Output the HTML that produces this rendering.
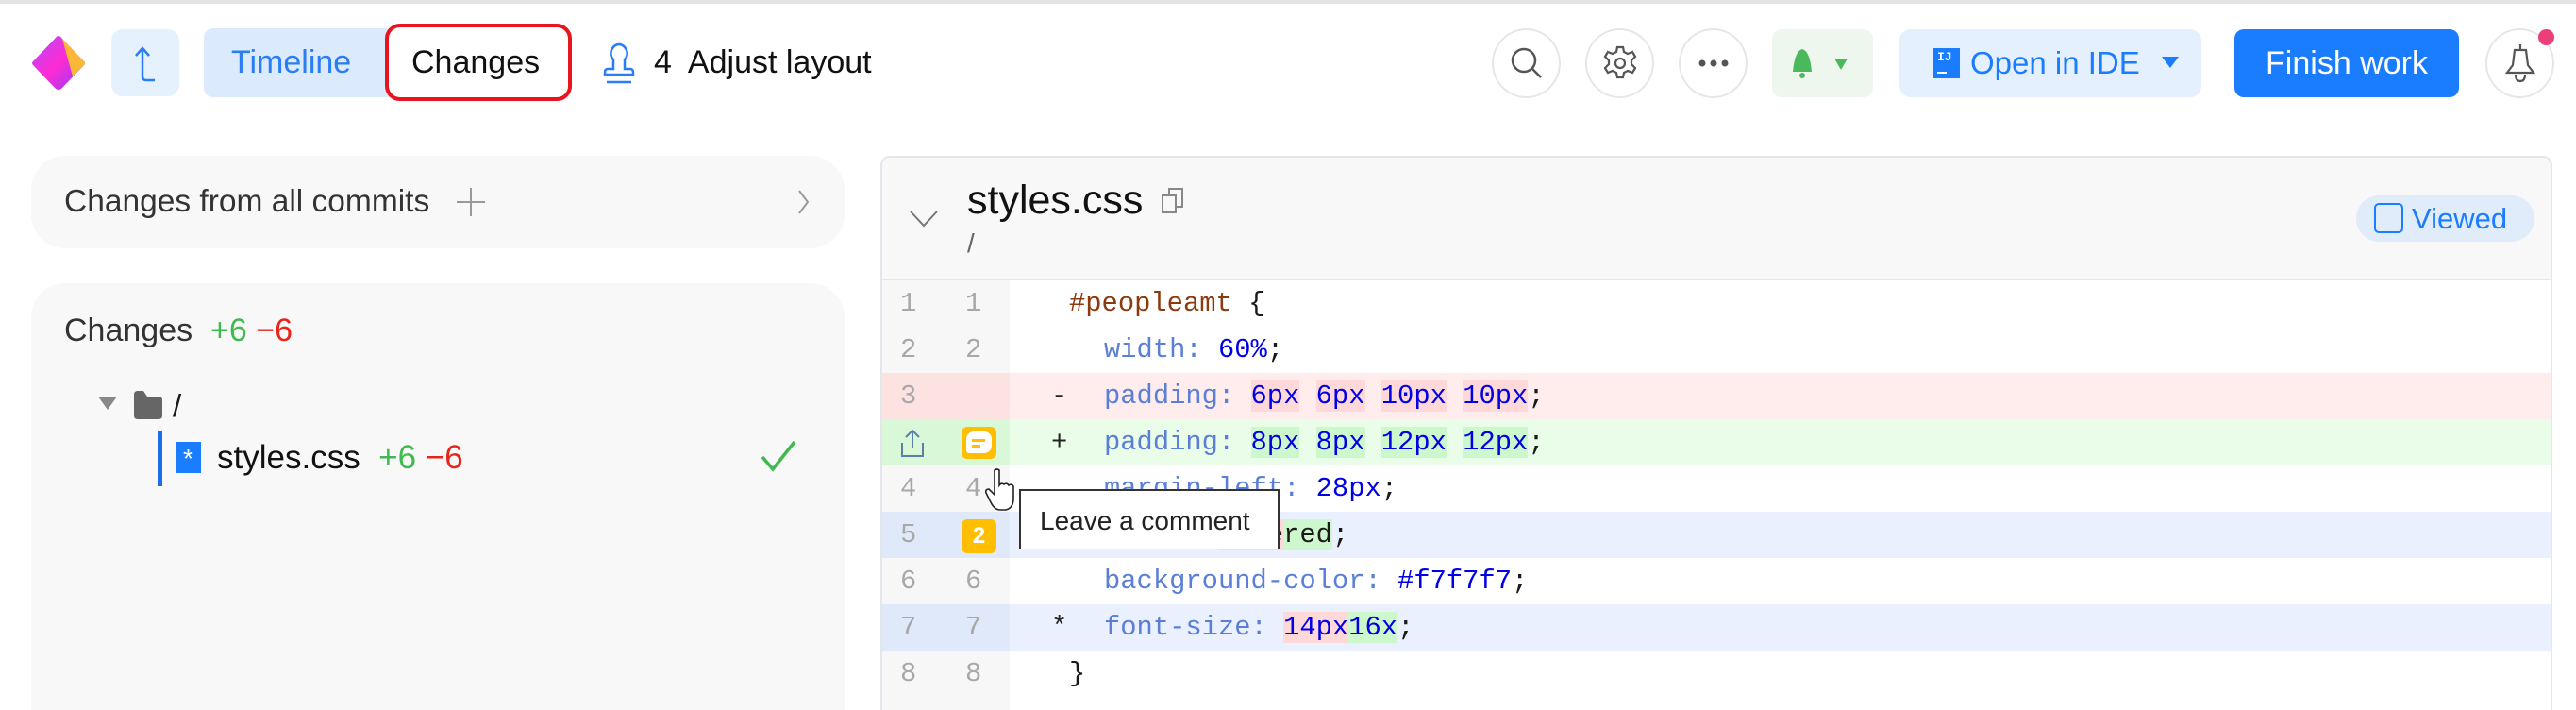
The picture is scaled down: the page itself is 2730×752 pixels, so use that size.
<!DOCTYPE html>
<html><head><meta charset="utf-8"><style>
*{box-sizing:border-box;margin:0;padding:0}
html{width:2730px;height:752px;overflow:hidden}
body{width:2730px;height:752px;overflow:hidden;background:#fff;font-family:"Liberation Sans",sans-serif;position:relative;color:#1a1a1a}
.a{position:absolute}
.circ{position:absolute;top:30px;width:73px;height:74px;border:2px solid #e6e6e6;border-radius:50%;display:flex;align-items:center;justify-content:center}
.row{position:absolute;left:935px;width:1768px;height:49px;font-family:"Liberation Mono",monospace;font-size:28.8px;line-height:49px;white-space:pre}
.g{position:absolute;left:0;top:0;width:135px;height:49px;background:#f7f7f7;color:#a8a8a8}
.g span{position:absolute}
.n1{left:19px}.n2{left:88px}
.c{position:absolute;left:135px;top:0;right:0;height:49px}
.code{position:absolute;left:235px}
.mk{position:absolute;left:179px;color:#222}
.p{color:#5b7fd8}.v{color:#0000e6}.s{color:#8b3a0f}
.hd{background:#ffd9d9}.ha{background:#cdf7cd}
</style></head><body>
<div class="a" style="left:0;top:0;width:2730px;height:4px;background:#e3e3e3"></div>
<svg class="a" style="left:33px;top:37px" width="58" height="60" viewBox="0 0 58 60"><defs><linearGradient id="lg" x1="0" y1="0" x2="1" y2="1"><stop offset="0" stop-color="#b14bff"/><stop offset=".5" stop-color="#ff2bd2"/><stop offset="1" stop-color="#8a3cff"/></linearGradient></defs><path d="M29 1 Q31 1 33 4 L56 28 Q58 30 56 32 L33 56 Q29 60 25 56 L2 32 Q0 30 2 28 L25 4 Q27 1 29 1Z" fill="url(#lg)"/><path d="M33 4 L56 28 Q58 30 56 32 L44 44 Z" fill="#ffcf1a" opacity=".85"/></svg>
<div class="a" style="left:118px;top:31px;width:72px;height:71px;background:#e6f1fe;border-radius:12px"></div>
<svg class="a" style="left:136px;top:45px" width="36" height="44" viewBox="0 0 36 44" fill="none" stroke="#2a7df5" stroke-width="2.5"><path d="M8 14 L15 6 L22 14 M15 6 V36 Q15 40 19 40 H28"/></svg>
<div class="a" style="left:216px;top:30px;width:390px;height:73px;background:#dbeafc;border-radius:10px"></div>
<div class="a" style="left:245px;top:30px;line-height:73px;font-size:34px;color:#2a7df5">Timeline</div>
<div class="a" style="left:408px;top:25px;width:198px;height:82px;border:4px solid #e8141e;border-radius:16px;background:#fff"></div>
<div class="a" style="left:436px;top:30px;line-height:73px;font-size:34px;color:#111">Changes</div>
<svg class="a" style="left:636px;top:45px" width="40" height="48" viewBox="0 0 40 48" fill="none" stroke="#2a7df5" stroke-width="2.5"><path d="M14 28 V18 Q10 14 12 8 Q15 2 20 2 Q25 2 28 8 Q30 14 26 18 V28 H32 Q35 28 35 32 V34 H5 V32 Q5 28 8 28 Z"/><path d="M7 42 H33"/></svg>
<div class="a" style="left:693px;top:30px;line-height:73px;font-size:34px;color:#111">4&nbsp; Adjust layout</div>
<div class="circ" style="left:1581px"><svg width="40" height="40" viewBox="0 0 40 40" fill="none" stroke="#555" stroke-width="2.5"><circle cx="17" cy="17" r="12"/><path d="M26 26 L35 35"/></svg></div>
<div class="circ" style="left:1680px"><svg width="40" height="40" viewBox="0 0 40 40" fill="none" stroke="#555" stroke-width="2.2"><path d="M17 3h6l1 5 4 2 5-2 3 5-4 4v4l4 4-3 5-5-2-4 2-1 5h-6l-1-5-4-2-5 2-3-5 4-4v-4l-4-4 3-5 5 2 4-2z"/><circle cx="20" cy="20" r="5"/></svg></div>
<div class="circ" style="left:1779px"><svg width="36" height="10"><circle cx="6" cy="5" r="3.5" fill="#555"/><circle cx="18" cy="5" r="3.5" fill="#555"/><circle cx="30" cy="5" r="3.5" fill="#555"/></svg></div>
<div class="a" style="left:1878px;top:31px;width:107px;height:72px;background:#edf7ee;border-radius:10px"></div>
<svg class="a" style="left:1896px;top:50px" width="72" height="34" viewBox="0 0 72 34"><path d="M4 26 Q6 4 14 2 Q22 4 24 26 Z" fill="#4cb85c"/><circle cx="14" cy="30" r="3" fill="#4cb85c"/><polygon points="48,12 62,12 55,24" fill="#4cb85c"/></svg>
<div class="a" style="left:2013px;top:31px;width:320px;height:72px;background:#e4f0fe;border-radius:12px"></div>
<div class="a" style="left:2049px;top:51px;width:28px;height:32px;background:#1a7cff;color:#fff;font-family:'Liberation Mono',monospace;font-weight:bold;font-size:13px;line-height:14px;padding:3px 0 0 4px">IJ<div style="width:10px;height:2px;background:#fff;margin-top:8px"></div></div>
<div class="a" style="left:2088px;top:30px;line-height:73px;font-size:33px;color:#1a7cff">Open in IDE</div>
<svg class="a" style="left:2291px;top:60px" width="18" height="14"><polygon points="0,0 18,0 9,12" fill="#1a7cff"/></svg>
<div class="a" style="left:2368px;top:31px;width:238px;height:72px;background:#1a7cff;border-radius:10px;color:#fff;font-size:34px;line-height:72px;text-align:center">Finish work</div>
<div class="circ" style="left:2634px"><svg width="40" height="44" viewBox="0 0 40 44" fill="none" stroke="#555" stroke-width="2.2"><path d="M20 2 V8 M14 8 H26 L28 24 L34 32 H6 L12 24 Z"/><path d="M15 34 Q15 41 20 41 Q25 41 25 34"/></svg></div>
<div class="a" style="left:2690px;top:31px;width:17px;height:17px;border-radius:50%;background:#ec3f7a"></div>
<div class="a" style="left:33px;top:165px;width:862px;height:98px;background:#f8f8f8;border-radius:36px"></div>
<div class="a" style="left:68px;top:165px;line-height:98px;font-size:33.5px;color:#333">Changes from all commits</div>
<svg class="a" style="left:483px;top:197px" width="32" height="34" stroke="#999" stroke-width="2"><path d="M16 2 V32 M1 17 H31"/></svg>
<svg class="a" style="left:845px;top:200px" width="14" height="28" fill="none" stroke="#999" stroke-width="2"><path d="M2 2 L11 14 L2 26"/></svg>
<div class="a" style="left:33px;top:300px;width:862px;height:452px;background:#f8f8f8;border-radius:36px 36px 0 0"></div>
<div class="a" style="left:68px;top:325px;line-height:50px;font-size:34px;color:#333">Changes&nbsp; <span style="color:#3fb950">+6</span> <span style="color:#e8241a">−6</span></div>
<svg class="a" style="left:104px;top:420px" width="20" height="16"><polygon points="0,0 20,0 10,14" fill="#888"/></svg>
<svg class="a" style="left:142px;top:414px" width="30" height="30"><path d="M0 4 Q0 0 4 0 H10 L14 6 H26 Q30 6 30 10 V26 Q30 30 26 30 H4 Q0 30 0 26 Z" fill="#666"/></svg>
<div class="a" style="left:183px;top:405px;font-size:33px;line-height:50px">/</div>
<div class="a" style="left:167px;top:456px;width:5px;height:59px;background:#1a6ee8"></div>
<div class="a" style="left:186px;top:468px;width:27px;height:33px;background:#1a7cff;color:#fff;font-size:28px;line-height:36px;text-align:center">*</div>
<div class="a" style="left:230px;top:460px;line-height:50px;font-size:35px;color:#111">styles.css&nbsp; <span style="color:#3fb950">+6</span> <span style="color:#e8241a">−6</span></div>
<svg class="a" style="left:806px;top:466px" width="38" height="34" fill="none" stroke="#3fb950" stroke-width="3.5"><path d="M2 18 L13 31 L36 2"/></svg>
<div class="a" style="left:933px;top:165px;width:1772px;height:587px;border:2px solid #e3e6ea;border-bottom:none;border-radius:10px 10px 0 0;background:#fff;overflow:hidden">
<div style="height:130px;background:#f8f8f8;border-bottom:2px solid #e3e6ea"></div></div>
<svg class="a" style="left:963px;top:222px" width="32" height="20" fill="none" stroke="#777" stroke-width="2"><path d="M2 2 L16 17 L30 2"/></svg>
<div class="a" style="left:1025px;top:187px;font-size:43px;line-height:50px;color:#111">styles.css</div>
<svg class="a" style="left:1231px;top:199px" width="24" height="28" fill="none" stroke="#888" stroke-width="2"><rect x="1" y="8" width="14" height="18"/><path d="M8 8 V1 H22 V20 H15"/></svg>
<div class="a" style="left:1025px;top:240px;font-size:28px;line-height:36px;color:#666">/</div>
<div class="a" style="left:2497px;top:207px;width:189px;height:49px;border-radius:25px;background:#e1ecfa"></div>
<div class="a" style="left:2516px;top:215px;width:31px;height:32px;border:2.5px solid #1a7cff;border-radius:5px"></div>
<div class="a" style="left:2556px;top:207px;line-height:49px;font-size:31px;color:#1a7cff">Viewed</div>
<div class="row" style="top:297px"><div class="g"><span class="n1">1</span><span class="n2">1</span></div><div class="c"><span class="code" style="left:63px"><span class="s">#peopleamt</span> {</span></div></div>
<div class="row" style="top:346px"><div class="g"><span class="n1">2</span><span class="n2">2</span></div><div class="c"><span class="code" style="left:100px"><span class="p">width:</span> <span class="v">60%</span>;</span></div></div>
<div class="row" style="top:395px"><div class="g" style="background:#fde2e2"><span class="n1">3</span></div><div class="c" style="background:#ffecec"><span class="mk" style="left:44px">-</span><span class="code" style="left:100px"><span class="p">padding:</span> <span class="v hd">6px</span> <span class="v hd">6px</span> <span class="v hd">10px</span> <span class="v hd">10px</span>;</span></div></div>
<div class="row" style="top:444px"><div class="g" style="background:#d8f8d8"></div><div class="c" style="background:#e9fde9"><span class="mk" style="left:44px">+</span><span class="code" style="left:100px"><span class="p">padding:</span> <span class="v ha">8px</span> <span class="v ha">8px</span> <span class="v ha">12px</span> <span class="v ha">12px</span>;</span></div></div>
<div class="row" style="top:493px"><div class="g"><span class="n1">4</span><span class="n2">4</span></div><div class="c"><span class="code" style="left:100px"><span class="p">margin-left:</span> <span class="v">28px</span>;</span></div></div>
<div class="row" style="top:542px"><div class="g" style="background:#e0e9f9"><span class="n1">5</span></div><div class="c" style="background:#eaf0fd"><span class="code" style="left:100px"><span class="p">align: </span><span class="hd">cene</span><span class="ha">red</span>;</span></div></div>
<div class="row" style="top:591px"><div class="g"><span class="n1">6</span><span class="n2">6</span></div><div class="c"><span class="code" style="left:100px"><span class="p">background-color:</span> <span class="v">#f7f7f7</span>;</span></div></div>
<div class="row" style="top:640px"><div class="g" style="background:#e0e9f9"><span class="n1">7</span><span class="n2">7</span></div><div class="c" style="background:#eaf0fd"><span class="mk" style="left:44px">*</span><span class="code" style="left:100px"><span class="p">font-size:</span> <span class="v hd">14px</span><span class="v ha">16x</span>;</span></div></div>
<div class="row" style="top:689px;height:63px"><div class="g" style="height:63px"><span class="n1">8</span><span class="n2">8</span></div><div class="c"><span class="code" style="left:63px">}</span></div></div>
<svg class="a" style="left:954px;top:453px" width="26" height="32" fill="none" stroke="#5a7fa8" stroke-width="2"><path d="M13 22 V3 M6 10 L13 3 L20 10 M2 16 V30 H24 V16"/></svg>
<div class="a" style="left:1019px;top:452px;width:37px;height:34px;background:#ffbf00;border-radius:6px"></div>
<div class="a" style="left:1024px;top:457px;width:27px;height:23px;background:#fff;border-radius:8px 8px 8px 3px"></div>
<div class="a" style="left:1030px;top:465px;width:14px;height:3px;background:#ffbf00"></div>
<div class="a" style="left:1030px;top:471px;width:9px;height:3px;background:#ffbf00"></div>
<div class="a" style="left:1019px;top:550px;width:37px;height:36px;background:#ffbf00;border-radius:6px;color:#fff;font-weight:bold;font-size:24px;line-height:36px;text-align:center">2</div>
<div class="a" style="left:1080px;top:518px;width:276px;height:64px;background:#fff;border:2px solid #333;border-bottom:none;font-size:28px;line-height:64px;padding-left:20px;color:#222">Leave a comment</div>
<svg class="a" style="left:1044px;top:496px" width="36" height="46" viewBox="0 0 36 46"><path d="M10 2 Q13 0 15 2 V18 Q17 15 20 17 Q23 15 25 18 Q28 16 30 19 V32 Q30 42 22 44 H16 Q10 44 6 36 L1 26 Q0 22 4 22 L10 28 Z" fill="#fff" stroke="#222" stroke-width="1.6"/></svg>
</body></html>
